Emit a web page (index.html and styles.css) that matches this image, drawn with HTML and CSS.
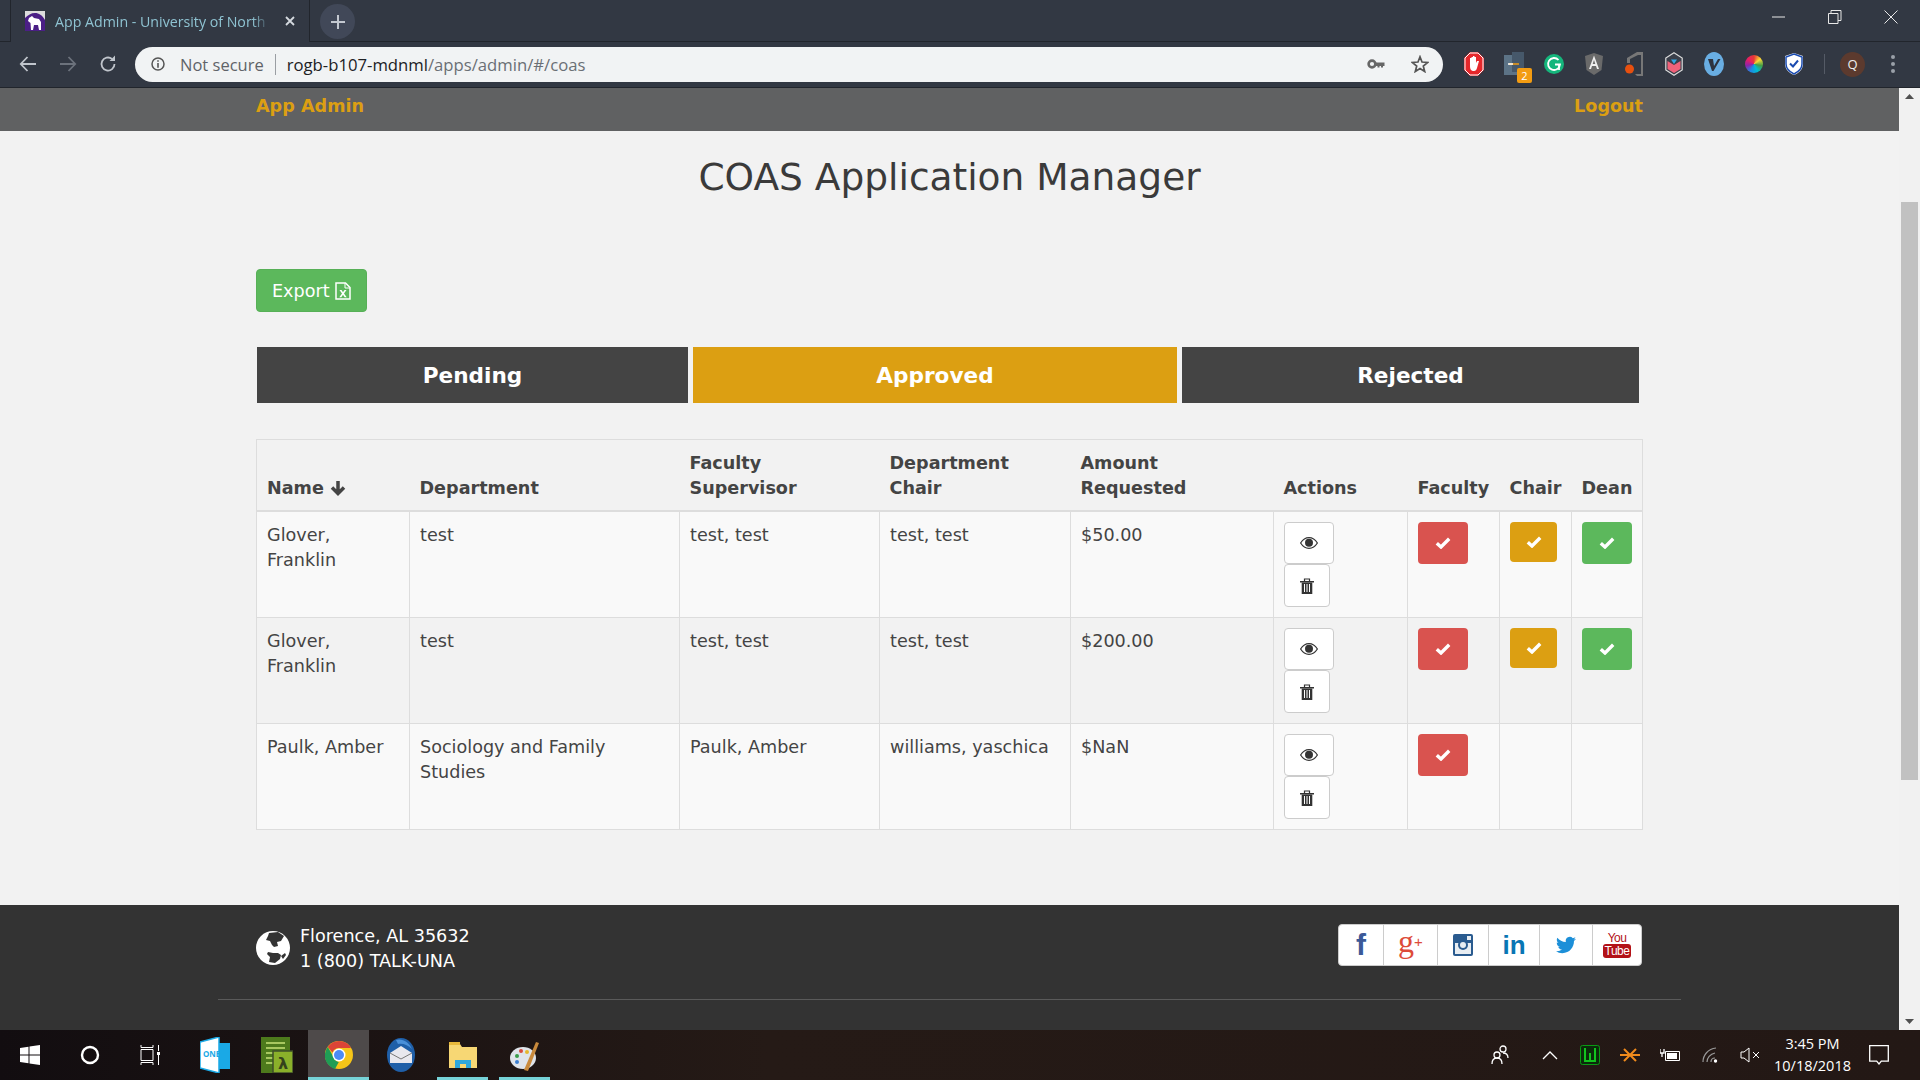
FILE: index.html
```html
<!DOCTYPE html>
<html lang="en">
<head>
    <meta charset="UTF-8">
    <title>App Admin - University of North Alabama</title>
    <link rel="stylesheet" href="styles.css">
</head>
<body>
    <svg class="defs" width="0" height="0">
        <symbol id="check" viewBox="0 0 16 12"><path d="M1.800 6.200 6 10 14.200 1.800" fill="none" stroke="#fff" stroke-width="3.400"/></symbol>
        <symbol id="eye" viewBox="0 0 18 12"><path d="M.6 6C3 2.200 6 .7 9 .7s6 1.500 8.400 5.300C15 9.800 12 11.300 9 11.300S3 9.800.6 6z" fill="none" stroke="#333" stroke-width="1.200"/><circle cx="9" cy="5.800" r="4" fill="#333"/></symbol>
        <symbol id="trash" viewBox="0 0 14 16"><path d="M0 3h14v1.500H0z" fill="#333"/><path d="M4.500 3V1h5v2" fill="none" stroke="#333" stroke-width="1.200"/><path d="M1.700 4.500h10.600V16H1.700z" fill="#333"/><path d="M4 6h1v8H4zM6.500 6h1v8h-1zM9 6h1v8H9z" fill="#fff"/></symbol>
    </svg>

    <header class="browser">
        <div class="tabstrip">
            <div class="tab">
                <svg class="favicon" width="20" height="20" viewBox="0 0 20 20"><rect width="20" height="20" fill="#4b1f86"/><path d="M0 0h20v9C17 4 14 2 10 2 6 2 3 4 0 7z" fill="#ddd"/><path d="M4 7l3-2 2 2 5 1 2 3v8h-2l-1-5H9l-1 5H6l-.5-7L3 10z" fill="#fff"/></svg>
                <span class="tab-title">App Admin - University of North Alabama</span>
                <svg class="tab-close" width="10" height="10" viewBox="0 0 10 10"><path d="M1 1l8 8M9 1 1 9" stroke="#d5d9df" stroke-width="1.800"/></svg>
            </div>
            <div class="new-tab">
                <svg width="14" height="14" viewBox="0 0 14 14"><path d="M7 0v14M0 7h14" stroke="#c3c8d0" stroke-width="2"/></svg>
            </div>
            <div class="window-controls">
                <svg width="14" height="14" viewBox="0 0 14 14"><path d="M0 7h13" stroke="#e8e8e8"/></svg>
                <svg width="14" height="14" viewBox="0 0 14 14"><path d="M.5 3.500h9.500v10H.5zM3 3.500V.5h10v10h-3" fill="none" stroke="#e8e8e8"/></svg>
                <svg width="14" height="14" viewBox="0 0 14 14"><path d="M.5.5l13 13M13.500.5l-13 13" stroke="#e8e8e8"/></svg>
            </div>
        </div>
        <div class="toolbar">
            <div class="nav-buttons">
                <svg width="18" height="16" viewBox="0 0 18 16"><path d="M17 8H2M8.500 1 1.800 8l6.700 7" fill="none" stroke="#c0c5cc" stroke-width="1.800"/></svg>
                <svg width="18" height="16" viewBox="0 0 18 16"><path d="M1 8h15M9.500 1l6.700 7-6.700 7" fill="none" stroke="#6c727c" stroke-width="1.800"/></svg>
                <svg width="18" height="18" viewBox="0 0 18 18"><path d="M15.500 9A6.500 6.500 0 1 1 13 3.900" fill="none" stroke="#c0c5cc" stroke-width="1.800"/><path d="M10.500 6H16V.5z" fill="#c0c5cc"/></svg>
            </div>
            <div class="omnibox">
                <svg class="info" width="14" height="14" viewBox="0 0 14 14"><circle cx="7" cy="7" r="6" fill="none" stroke="#555" stroke-width="1.500"/><path d="M6.200 3.300h1.600v1.500H6.200zM6.200 6h1.600v4.700H6.200z" fill="#555"/></svg>
                <span class="not-secure">Not secure</span>
                <span class="omni-sep"></span>
                <span class="url">rogb-b107-mdnml<span class="url-path">/apps/admin/#/coas</span></span>
                <svg class="key" width="18" height="10" viewBox="0 0 18 10"><circle cx="5" cy="5" r="3.400" fill="none" stroke="#666" stroke-width="2.600"/><path d="M8 3.500h9.500V7H16v1.500h-2V7h-1.500v1.500h-2V7H8z" fill="#666"/></svg>
                <svg class="star" width="18" height="18" viewBox="0 0 18 18"><path d="M9 1.800 11 7l5.700.4-4.400 3.600 1.400 5.500L9 13.500l-4.700 3L5.700 11 1.300 7.400 7 7z" fill="none" stroke="#555" stroke-width="1.700"/></svg>
            </div>
            <div class="extensions">
                <span class="ext"><svg width="20" height="24" viewBox="0 0 20 24"><path d="M6 0h8l6 6v12l-6 6H6l-6-6V6z" fill="#e6272b"/><path d="M6 1h8l5 5v12l-5 5H6l-5-5V6z" fill="none" stroke="#fff"/><path d="M6 11V6h1.500v4-5H9v5-6h1.500v6-5H12v6l1-2h2l-2 7c-.5 2-1.500 3-3 3-3 0-4-2-4-5z" fill="#fff"/></svg></span>
                <span class="ext ext-badge"><svg width="20" height="24" viewBox="0 0 20 24"><rect y="3" width="14" height="20" fill="#5c7386"/><rect x="8" width="12" height="20" fill="#46586a"/><path d="M5 12h10" stroke="#f39c12" stroke-width="1.500"/><path d="M4 12h5" stroke="#fff" stroke-width="1.500"/></svg><span class="badge">2</span></span>
                <span class="ext"><svg width="20" height="20" viewBox="0 0 20 20"><circle cx="10" cy="10" r="10" fill="#15b67c"/><path d="M14.500 6A6 6 0 1 0 16 10.500h-5" fill="none" stroke="#fff" stroke-width="1.800"/><path d="M15 11v5" stroke="#fff" stroke-width="1.800"/></svg></span>
                <span class="ext"><svg width="18" height="22" viewBox="0 0 18 22"><path d="M9 0l9 3-1.500 14L9 22l-7.500-5L0 3z" fill="#6a6a6a"/><path d="M9 2.500 4 16h2l1-3h4l1 3h2zM7.700 11 9 7l1.300 4z" fill="#eee"/></svg></span>
                <span class="ext"><svg width="18" height="24" viewBox="0 0 18 24"><path d="M2 6l10-6h6v24h-6l-2-2h6V3h-3L5 7v4H2z" fill="#777"/><circle cx="4.500" cy="17" r="4.500" fill="#e8500f"/></svg></span>
                <span class="ext"><svg width="18" height="24" viewBox="0 0 18 24"><path d="M9 .8 17.200 6v12L9 23.200.8 18V6z" fill="#3a3f4a" stroke="#ddd" stroke-width="1.200"/><path d="M2.500 9 9 13l6.500-4v8L9 21l-6.500-4z" fill="#f0627a"/><path d="M6 7.500h6L9 12z" fill="#35a6e0"/></svg></span>
                <span class="ext"><svg width="20" height="24" viewBox="0 0 20 24"><ellipse cx="10" cy="12" rx="10" ry="12" fill="#69aee3"/><path d="M4 7h5l1 7 4-7h2.500L9.500 19H8z" fill="#2e3440"/></svg></span>
                <span class="ext"><span class="wheel"></span></span>
                <span class="ext"><svg width="18" height="22" viewBox="0 0 18 22"><path d="M9 0l9 3v8c0 5-4 9-9 11-5-2-9-6-9-11V3z" fill="#fff"/><path d="M9 1l8 3v7c0 4-4 8-8 10-4-2-8-6-8-10V4z" fill="none" stroke="#1a4bb0" stroke-width="1.500"/><path d="M5 10.500l3 3 5-6" fill="none" stroke="#1a4bb0" stroke-width="2"/></svg></span>
            </div>
            <span class="tool-sep"></span>
            <span class="avatar">Q</span>
            <svg class="menu-dots" width="4" height="18" viewBox="0 0 4 18"><circle cx="2" cy="2" r="2" fill="#9aa0a8"/><circle cx="2" cy="9" r="2" fill="#9aa0a8"/><circle cx="2" cy="16" r="2" fill="#9aa0a8"/></svg>
        </div>
    </header>

    <div class="viewport">
        <div class="page">
            <nav class="topnav">
                <div class="topnav-inner">
                    <a class="nav-link">App Admin</a>
                    <a class="nav-link">Logout</a>
                </div>
            </nav>

            <main class="content">
                <h1 class="page-title">COAS Application Manager</h1>

                <button class="btn-export">Export
                    <svg width="16" height="18" viewBox="0 0 16 18"><path d="M1 1h9.500L15 5.500V17H1z" fill="none" stroke="#fff" stroke-width="1.500"/><path d="M10 1v5h5" fill="none" stroke="#fff"/><path d="M4.500 8h2l1.500 2.300L9.500 8h2L9 11.500l2.700 3.800h-2L8 12.800l-1.700 2.500h-2L7 11.500z" fill="#fff"/></svg>
                </button>

                <div class="status-tabs">
                    <div class="status-tab">Pending</div>
                    <div class="status-tab active">Approved</div>
                    <div class="status-tab">Rejected</div>
                </div>

                <table class="coas-table">
                    <colgroup>
                        <col class="c-name"><col class="c-dept"><col class="c-sup"><col class="c-chair"><col class="c-amt">
                        <col class="c-act"><col class="c-fac"><col class="c-cha"><col class="c-dean">
                    </colgroup>
                    <thead>
                        <tr>
                            <th>Name <svg class="sort-arrow" width="16" height="16" viewBox="0 0 16 16"><path d="M8 1v13M2 7.500 8 13.500l6-6" fill="none" stroke="#444" stroke-width="3.500"/></svg></th>
                            <th>Department</th>
                            <th>Faculty Supervisor</th>
                            <th>Department Chair</th>
                            <th>Amount Requested</th>
                            <th>Actions</th>
                            <th>Faculty</th>
                            <th>Chair</th>
                            <th>Dean</th>
                        </tr>
                    </thead>
                    <tbody>
                        <tr>
                            <td>Glover, Franklin</td>
                            <td>test</td>
                            <td>test, test</td>
                            <td>test, test</td>
                            <td>$50.00</td>
                            <td>
                                <button class="btn-plain btn-view"><svg width="18" height="12"><use href="#eye"/></svg></button>
                                <button class="btn-plain btn-del"><svg width="14" height="16"><use href="#trash"/></svg></button>
                            </td>
                            <td><button class="btn-ok red"><svg width="16" height="12"><use href="#check"/></svg></button></td>
                            <td><button class="btn-ok gold"><svg width="16" height="12"><use href="#check"/></svg></button></td>
                            <td><button class="btn-ok green"><svg width="16" height="12"><use href="#check"/></svg></button></td>
                        </tr>
                        <tr>
                            <td>Glover, Franklin</td>
                            <td>test</td>
                            <td>test, test</td>
                            <td>test, test</td>
                            <td>$200.00</td>
                            <td>
                                <button class="btn-plain btn-view"><svg width="18" height="12"><use href="#eye"/></svg></button>
                                <button class="btn-plain btn-del"><svg width="14" height="16"><use href="#trash"/></svg></button>
                            </td>
                            <td><button class="btn-ok red"><svg width="16" height="12"><use href="#check"/></svg></button></td>
                            <td><button class="btn-ok gold"><svg width="16" height="12"><use href="#check"/></svg></button></td>
                            <td><button class="btn-ok green"><svg width="16" height="12"><use href="#check"/></svg></button></td>
                        </tr>
                        <tr>
                            <td>Paulk, Amber</td>
                            <td>Sociology and Family Studies</td>
                            <td>Paulk, Amber</td>
                            <td>williams, yaschica</td>
                            <td>$NaN</td>
                            <td>
                                <button class="btn-plain btn-view"><svg width="18" height="12"><use href="#eye"/></svg></button>
                                <button class="btn-plain btn-del"><svg width="14" height="16"><use href="#trash"/></svg></button>
                            </td>
                            <td><button class="btn-ok red"><svg width="16" height="12"><use href="#check"/></svg></button></td>
                            <td></td>
                            <td></td>
                        </tr>
                    </tbody>
                </table>
            </main>

            <footer class="site-footer">
                <div class="footer-row">
                    <div class="contact">
                        <svg class="globe" width="34" height="34" viewBox="0 0 34 34"><circle cx="17" cy="17" r="17" fill="#fff"/><path d="M13 2l9-1 6 4-3 5-4 1 1 4-4 1-2-2-2-4-4-1 2-4zM12 21l5 1 5 0 3 2-1 4-5 4-6-1 1-5-3-3z" fill="#333"/><path d="M25 25l4-3 1 2-3 4z" fill="#333"/></svg>
                        <div class="contact-text">
                            <div>Florence, AL 35632</div>
                            <div>1 (800) TALK-UNA</div>
                        </div>
                    </div>
                    <div class="social">
                        <a class="soc soc-fb">f</a>
                        <a class="soc soc-gp">g<sup>+</sup></a>
                        <a class="soc soc-ig"><svg width="20" height="22" viewBox="0 0 20 22"><rect width="20" height="22" rx="2" fill="#2a5b8f"/><rect x="2" y="9" width="16" height="11" fill="#e8edf2"/><circle cx="10" cy="11" r="5" fill="#2a5b8f"/><circle cx="10" cy="11" r="3" fill="#e8edf2"/><rect x="14" y="2" width="4" height="4" fill="#e8edf2"/></svg></a>
                        <a class="soc soc-in">in</a>
                        <a class="soc soc-tw"><svg width="20" height="20" viewBox="0 0 24 24"><path fill="#1c8fd8" d="M23.953 4.570a10 10 0 01-2.825.775 4.958 4.958 0 002.163-2.723c-.951.555-2.005.959-3.127 1.184a4.920 4.920 0 00-8.384 4.482C7.690 8.095 4.067 6.130 1.640 3.162a4.822 4.822 0 00-.666 2.475c0 1.710.870 3.213 2.188 4.096a4.904 4.904 0 01-2.228-.616v.060a4.923 4.923 0 003.946 4.827 4.996 4.996 0 01-2.212.085 4.936 4.936 0 004.604 3.417 9.867 9.867 0 01-6.102 2.105c-.390 0-.779-.023-1.170-.067a13.995 13.995 0 007.557 2.209c9.053 0 13.998-7.496 13.998-13.985 0-.210 0-.420-.015-.630A9.935 9.935 0 0024 4.590z"/></svg></a>
                        <a class="soc soc-yt"><span class="yt-you">You</span><span class="yt-tube">Tube</span></a>
                    </div>
                </div>
                <hr class="footer-rule">
            </footer>
        </div>

        <div class="scrollbar">
            <svg width="9" height="5" viewBox="0 0 9 5"><path d="M4.500 0 9 5H0z" fill="#505050"/></svg>
            <div class="scroll-track"><div class="scroll-thumb"></div></div>
            <svg width="9" height="5" viewBox="0 0 9 5"><path d="M4.500 5 9 0H0z" fill="#505050"/></svg>
        </div>
    </div>

    <footer class="taskbar">
        <div class="task-left">
            <span class="sys"><svg width="20" height="20" viewBox="0 0 20 20"><path d="M0 3l8.500-1.300V9.500H0zM9.500 1.500 20 0v9.500H9.500zM0 10.500h8.500v7.800L0 17zM9.500 10.500H20V20L9.500 18.500z" fill="#fff"/></svg></span>
            <span class="sys"><svg width="20" height="20" viewBox="0 0 20 20"><circle cx="10" cy="10" r="8" fill="none" stroke="#fff" stroke-width="2.400"/></svg></span>
            <span class="sys"><svg width="20" height="22" viewBox="0 0 20 22"><path d="M1 5.500h12v11H1zM1 1v2.500h12V1M1 21v-2.500h12V21M18.500 1v6M18.500 11v10" fill="none" stroke="#fff"/><rect x="17" y="8" width="3" height="3" fill="#fff"/></svg></span>
            <div class="apps">
                <span class="app"><svg width="30" height="36" viewBox="0 0 30 36"><path d="M11 6h19v26H11z" fill="#1aa9e6"/><path d="M0 5 19 0v36L0 31z" fill="#fff" stroke="#1aa9e6" stroke-width="1.500"/><text x="3" y="20" class="one-label">ONE</text></svg></span>
                <span class="app"><svg width="32" height="36" viewBox="0 0 32 36"><rect width="29" height="36" fill="#4d7a1c"/><path d="M5 6h19M5 11h19M5 16h12M5 21h12M5 26h12" stroke="#a8c860" stroke-width="2"/><rect x="12" y="14" width="20" height="22" fill="#8ab02a" stroke="#3e4d2a" stroke-width="1.500"/><text x="17" y="32" class="lambda-label">λ</text></svg></span>
                <span class="app app-active open"><svg width="28" height="34" viewBox="0 0 28 28"><circle cx="14" cy="14" r="14" fill="#f5c518"/><path d="M14 0a14 14 0 0 1 12.100 7H14a7 7 0 0 0-6.500 4.500L2.800 6A14 14 0 0 1 14 0z" fill="#dc4437"/><path d="M2.800 6l6 10.500a7 7 0 0 0 5 4.500L10 28A14 14 0 0 1 2.800 6z" fill="#1f9d55"/><circle cx="14" cy="14" r="6.500" fill="#fff"/><circle cx="14" cy="14" r="5" fill="#4c8bf5"/></svg></span>
                <span class="app"><svg width="30" height="36" viewBox="0 0 30 36"><ellipse cx="15" cy="18" rx="14" ry="17" fill="#1f5fa8"/><path d="M4 16 15 9l11 7v10H4z" fill="#e8e8ee"/><path d="M4 16l11 6 11-6" fill="none" stroke="#777"/><path d="M10 3c6-2 13 2 16 9-4-4-9-6-14-5z" fill="#4a90d9"/></svg></span>
                <span class="app open"><svg width="28" height="26" viewBox="0 0 28 26"><path d="M0 2h11l2 3h15v21H0z" fill="#f7d774"/><rect y="0" width="11" height="3" fill="#e8b93c"/><path d="M6 26v-8h16v8h-5v-4h-6v4z" fill="#2fa8de"/></svg></span>
                <span class="app open"><svg width="30" height="34" viewBox="0 0 30 34"><ellipse cx="13" cy="20" rx="13" ry="11" fill="#dfe4ea"/><circle cx="7" cy="18" r="2" fill="#3a9e4c"/><circle cx="11" cy="13" r="2" fill="#d94b3c"/><circle cx="17" cy="14" r="2" fill="#e5b82e"/><circle cx="7" cy="24" r="2" fill="#3c7fd1"/><path d="M14 32 26 4l3 1-11 28z" fill="#c98a3c"/></svg></span>
            </div>
        </div>
        <div class="task-right">
            <span class="tray tray-people"><svg width="18" height="20" viewBox="0 0 18 20"><circle cx="12" cy="4" r="3" fill="none" stroke="#fff" stroke-width="1.300"/><circle cx="6" cy="10" r="3" fill="none" stroke="#fff" stroke-width="1.300"/><path d="M1 19c0-4 2-6 5-6s5 2 5 6M12 8c3 0 5 2 5 5" fill="none" stroke="#fff" stroke-width="1.300"/></svg></span>
            <span class="tray tray-caret"><svg width="16" height="9" viewBox="0 0 16 9"><path d="M1 8l7-7 7 7" fill="none" stroke="#fff" stroke-width="1.300"/></svg></span>
            <span class="tray"><svg width="20" height="20" viewBox="0 0 20 20"><rect x=".5" y=".5" width="19" height="19" rx="2" fill="#0b2a0b" stroke="#0a9a14"/><path d="M5 3v13h10V3M10 8v8" fill="none" stroke="#12c21e" stroke-width="2"/></svg></span>
            <span class="tray"><svg width="20" height="14" viewBox="0 0 20 14"><path d="M0 7h20M4 1l12 12M16 1 4 13" stroke="#f08a1c" stroke-width="2"/></svg></span>
            <span class="tray"><svg width="20" height="14" viewBox="0 0 20 14"><path d="M5.500 3.500h14v9h-14z" fill="none" stroke="#fff"/><rect x="7" y="5" width="10" height="6" fill="#fff"/><path d="M0 1v4h4V1M2 5v4" fill="none" stroke="#fff" stroke-width="1.300"/></svg></span>
            <span class="tray"><svg width="16" height="16" viewBox="0 0 16 16"><path d="M1 15C1 8 6 2 14 1M5 15c0-4 3-8 8-9M9 15c0-2 1-4 4-4" fill="none" stroke="#9a9a9a" stroke-width="1.200"/><circle cx="13.500" cy="14" r="1.700" fill="#fff"/></svg></span>
            <span class="tray"><svg width="20" height="16" viewBox="0 0 20 16"><path d="M1 5h3l5-4v14l-5-4H1z" fill="none" stroke="#fff"/><path d="M13 5l6 6M19 5l-6 6" stroke="#fff"/></svg></span>
            <div class="clock">
                <div>3:45 PM</div>
                <div>10/18/2018</div>
            </div>
            <span class="notify"><svg width="20" height="20" viewBox="0 0 20 20"><path d="M.7.7h18.600v15.500h-7l-2.300 2.800-2.300-2.800h-7z" fill="none" stroke="#fff" stroke-width="1.300"/></svg></span>
        </div>
    </footer>
</body>
</html>
```

FILE: styles.css
```css
:root {
    --chrome-bg: #323843;
    --chrome-line: #21252c;
    --gold: #dc9f12;
    --green: #5cb85c;
    --red: #d9534f;
    --dark: #444444;
    --border: #dddddd;
}

* {
    box-sizing: border-box;
}

html, body {
    margin: 0;
    height: 100%;
    overflow: hidden;
}

body {
    display: flex;
    flex-direction: column;
    height: 1080px;
    font-family: "DejaVu Sans", sans-serif;
    font-size: 17.6px;
    color: #444;
    background: #f2f2f2;
}

.defs {
    display: block;
    height: 0;
    position: absolute;
}

/* browser window */
.browser {
    height: 88px;
    background: var(--chrome-bg);
    font-family: "Open Sans", sans-serif;
    flex: none;
}

.tabstrip {
    display: flex;
    align-items: flex-start;
    height: 42px;
    padding-left: 10px;
    border-bottom: 1px solid var(--chrome-line);
}

.tab {
    display: flex;
    align-items: center;
    width: 300px;
    height: 42px;
    padding: 0 14px 0 14px;
    border: 1px solid var(--chrome-line);
    border-top: none;
    border-bottom: none;
    background: var(--chrome-bg);
}

.favicon {
    flex: none;
}

.tab-title {
    width: 215px;
    margin-left: 10px;
    overflow: hidden;
    white-space: nowrap;
    font-size: 14.2px;
    color: #8fc3d2;
    -webkit-mask-image: linear-gradient(to right, #000 92%, transparent);
    mask-image: linear-gradient(to right, #000 92%, transparent);
}

.tab-close {
    margin-left: 15px;
    flex: none;
}

.new-tab {
    display: flex;
    align-items: center;
    justify-content: center;
    width: 35px;
    height: 35px;
    margin: 4px 0 0 10px;
    border-radius: 50%;
    background: #414858;
}

.window-controls {
    display: flex;
    gap: 42px;
    margin-left: auto;
    padding: 10px 22px 0 0;
}

.toolbar {
    display: flex;
    align-items: center;
    height: 46px;
    border-bottom: 1px solid var(--chrome-line);
    padding-bottom: 1px;
}

.nav-buttons {
    display: flex;
    align-items: center;
    gap: 22px;
    padding-left: 19px;
    width: 135px;
}

.omnibox {
    display: flex;
    align-items: center;
    width: 1308px;
    height: 35px;
    border-radius: 18px;
    background: #f1f3f4;
    padding: 0 14px 0 16px;
    font-size: 16.5px;
}

.info {
    flex: none;
}

.not-secure {
    margin-left: 15px;
    color: #5f6368;
}

.omni-sep {
    width: 1px;
    height: 21px;
    margin: 0 11px;
    background: #9a9ea3;
}

.url {
    font-size: 16.7px;
    color: #202124;
}

.url-path {
    color: #6a6f75;
}

.key {
    margin-left: auto;
}

.star {
    margin-left: 26px;
}

.extensions {
    display: flex;
    margin-left: 11px;
}

.ext {
    position: relative;
    display: flex;
    align-items: center;
    justify-content: center;
    width: 40px;
    height: 26px;
}

.wheel {
    width: 18px;
    height: 18px;
    border-radius: 50%;
    background: conic-gradient(#e53935, #fdd835, #43a047, #00bcd4, #1e88e5, #8e24aa, #e91e63, #e53935);
}

.badge {
    position: absolute;
    right: 2px;
    bottom: -6px;
    width: 15px;
    height: 15px;
    border-radius: 2px;
    background: #f39c12;
    color: #fff;
    font-size: 11px;
    line-height: 15px;
    text-align: center;
}

.tool-sep {
    width: 1px;
    height: 20px;
    margin-left: 10px;
    background: #555b66;
}

.avatar {
    width: 25px;
    height: 25px;
    margin-left: 15px;
    border-radius: 50%;
    background: #5c3a2e;
    color: #eee;
    font-size: 13px;
    line-height: 25px;
    text-align: center;
}

.menu-dots {
    margin-left: 26px;
}

/* page area */
.viewport {
    display: flex;
    flex: 1;
    min-height: 0;
}

.page {
    display: flex;
    flex-direction: column;
    flex: 1;
    min-width: 0;
}

.scrollbar {
    display: flex;
    flex-direction: column;
    align-items: center;
    flex: none;
    width: 21px;
    padding: 6px 2px;
    background: #f1f1f1;
}

.scroll-track {
    flex: 1;
    width: 100%;
    padding-top: 103px;
}

.scroll-thumb {
    width: 17px;
    height: 578px;
    background: #c1c1c1;
}

.topnav {
    height: 43px;
    flex: none;
    background: #606162;
    padding-top: 6px;
}

.topnav-inner {
    display: flex;
    justify-content: space-between;
    width: 1387px;
    margin: 0 auto;
}

.nav-link {
    font-weight: bold;
    line-height: 25px;
    color: var(--gold);
}

.content {
    flex: 1;
    width: 1387px;
    margin: 0 auto;
}

.page-title {
    margin: 23px 0 0;
    font-size: 37.5px;
    font-weight: normal;
    line-height: 46px;
    text-align: center;
    color: #3a3a3a;
}

.btn-export {
    display: flex;
    align-items: center;
    gap: 5px;
    width: 111px;
    height: 43px;
    margin-top: 69px;
    padding: 0 15px;
    border: 1px solid #57b057;
    border-radius: 4px;
    background: var(--green);
    color: #fff;
    font-family: "DejaVu Sans", sans-serif;
    font-size: 17.6px;
}

.status-tabs {
    display: grid;
    grid-template-columns: 431px 484px 457px;
    gap: 5px;
    margin: 35px 0 0 1px;
}

.status-tab {
    height: 56px;
    background: var(--dark);
    color: #fff;
    font-weight: bold;
    font-size: 21.6px;
    line-height: 58px;
    text-align: center;
}

.status-tab.active {
    background: var(--gold);
}

.coas-table {
    width: 1386px;
    margin-top: 36px;
    border-collapse: collapse;
    table-layout: fixed;
    line-height: 25px;
}

.c-name { width: 153px; }
.c-dept { width: 270px; }
.c-sup { width: 200px; }
.c-chair { width: 191px; }
.c-amt { width: 203px; }
.c-act { width: 134px; }
.c-fac { width: 92px; }
.c-cha { width: 72px; }
.c-dean { width: 71px; }

.coas-table th,
.coas-table td {
    padding: 11px 10px 10px;
    border: 1px solid var(--border);
    text-align: left;
    vertical-align: top;
}

.coas-table th {
    height: 71px;
    padding: 11px 10px 9px;
    border-width: 1px 0 2px;
    vertical-align: bottom;
}

.coas-table th:first-child {
    border-left-width: 1px;
}

.coas-table th:last-child {
    border-right-width: 1px;
}

.coas-table tbody tr {
    height: 106px;
    background: #f9f9f9;
}

.coas-table tbody tr:nth-child(even) {
    background: #f2f2f2;
}

.sort-arrow {
    vertical-align: -2px;
}

.btn-plain {
    display: flex;
    align-items: center;
    justify-content: center;
    height: 43px;
    padding: 0;
    border: 1px solid #ccc;
    border-radius: 4px;
    background: #fff;
}

.btn-view {
    width: 50px;
    height: 42px;
    margin-top: -1px;
}

.btn-del { width: 46px; }

.btn-ok {
    display: flex;
    align-items: center;
    justify-content: center;
    width: 50px;
    height: 42px;
    margin-top: -1px;
    padding: 0;
    border: none;
    border-radius: 4px;
}

.btn-ok.red { background: var(--red); }
.btn-ok.green { background: var(--green); }
.btn-ok.gold {
    width: 47px;
    height: 40px;
    background: var(--gold);
}

/* site footer */
.site-footer {
    height: 125px;
    flex: none;
    background: #333333;
    padding-top: 19px;
}

.footer-row {
    display: flex;
    justify-content: space-between;
    width: 1387px;
    height: 42px;
    margin: 0 auto;
}

.contact {
    display: flex;
    align-items: flex-start;
    gap: 10px;
    color: #fff;
    line-height: 25px;
}

.globe {
    margin-top: 7px;
}

.social {
    display: flex;
    width: 304px;
    height: 42px;
    margin-right: 1px;
    border: 1px solid #ccc;
    border-radius: 4px;
    background: #fff;
}

.soc {
    display: flex;
    align-items: center;
    justify-content: center;
    border-left: 1px solid #ccc;
}

.soc-fb {
    width: 44px;
    border-left: none;
    color: #3b5998;
    font-family: "Liberation Sans", sans-serif;
    font-weight: bold;
    font-size: 30px;
}

.soc-gp {
    width: 54px;
    color: #dd4b39;
    font-family: "Liberation Serif", serif;
    font-size: 32px;
    line-height: 1;
    padding-bottom: 8px;
}

.soc-gp sup {
    font-size: 15px;
    font-family: "Liberation Sans", sans-serif;
}

.soc-ig { width: 51px; }

.soc-in {
    width: 51px;
    color: #0976b4;
    font-family: "Liberation Sans", sans-serif;
    font-weight: bold;
    font-size: 26px;
}

.soc-tw { width: 53px; }

.soc-yt {
    flex: 1;
    flex-direction: column;
    font-family: "Liberation Sans", sans-serif;
    line-height: 1;
}

.yt-you {
    color: #b31217;
    font-size: 12px;
    letter-spacing: -0.5px;
}

.yt-tube {
    padding: 1px 2px;
    border-radius: 3px;
    background: #b31217;
    color: #fff;
    font-size: 12px;
    letter-spacing: -0.5px;
}

.footer-rule {
    width: 1463px;
    height: 1px;
    margin: 33px auto 0;
    border: none;
    background: #5a5a5a;
}

/* windows taskbar */
.taskbar {
    display: flex;
    justify-content: space-between;
    height: 50px;
    flex: none;
    background: linear-gradient(to right, #120d10, #251a16 40%, #231815);
    color: #fff;
    font-family: "Open Sans", sans-serif;
}

.task-left,
.task-right {
    display: flex;
    align-items: center;
}

.sys {
    display: flex;
    align-items: center;
    justify-content: center;
    width: 60px;
    height: 50px;
}

.apps {
    display: flex;
    gap: 1px;
    margin-left: 4px;
}

.app {
    position: relative;
    display: flex;
    align-items: center;
    justify-content: center;
    width: 61px;
    height: 50px;
}

.app.open::after {
    content: "";
    position: absolute;
    left: 5px;
    right: 5px;
    bottom: 0;
    height: 3px;
    background: #76d3d8;
}

.app-active {
    background: #4e4a4a;
}

.app-active.open::after {
    left: 0;
    right: 0;
}

.one-label {
    font: bold 8px "Open Sans", sans-serif;
    fill: #1aa9e6;
}

.lambda-label {
    font: bold 16px "DejaVu Sans", sans-serif;
    fill: #34421c;
}

.tray {
    display: flex;
    align-items: center;
    justify-content: center;
    width: 40px;
    height: 50px;
}

.tray-caret {
    margin-left: 10px;
}

.clock {
    width: 85px;
    font-size: 14.5px;
    line-height: 22px;
    text-align: center;
}

.notify {
    display: flex;
    align-items: center;
    justify-content: center;
    width: 48px;
    height: 50px;
    margin-right: 17px;
}
```
